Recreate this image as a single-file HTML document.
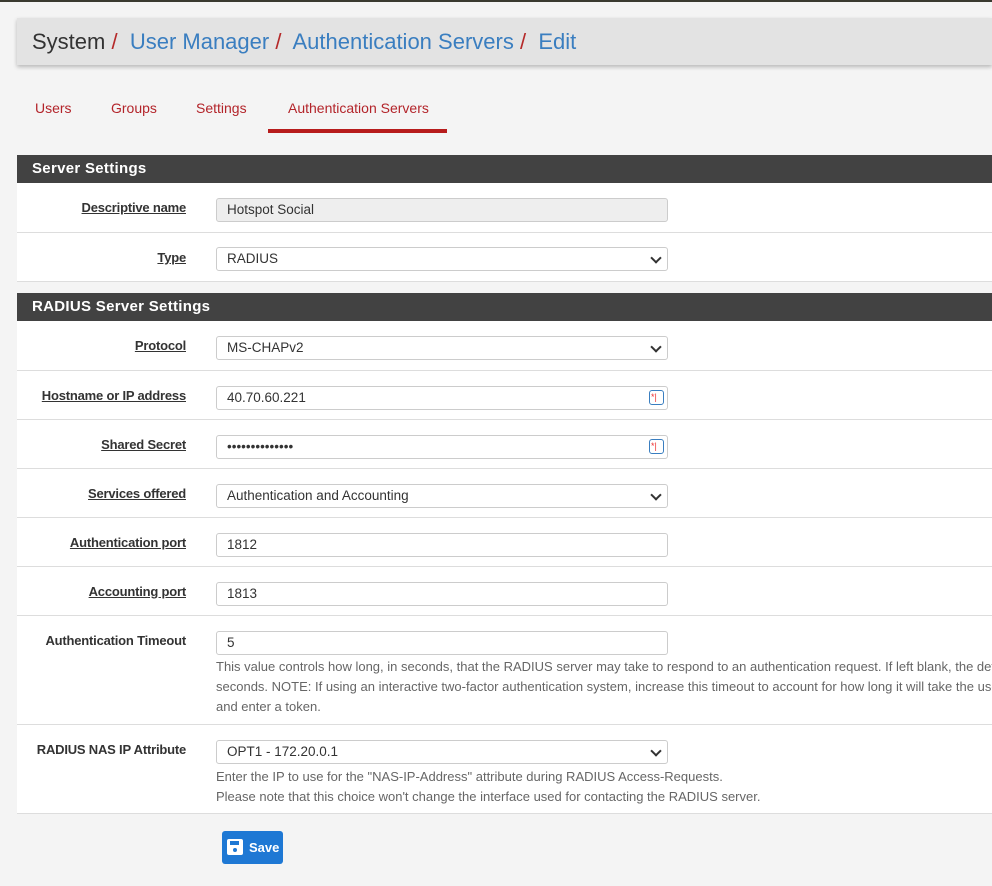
<!DOCTYPE html>
<html><head><style>
*{box-sizing:border-box;margin:0;padding:0}
html,body{width:992px;height:886px;overflow:hidden}
body{background:#f4f4f4;font-family:"Liberation Sans",sans-serif;position:relative}
.top{position:absolute;left:0;top:0;width:992px;height:2px;background:#3a3a30}
.bc{position:absolute;left:17px;top:18px;width:975px;height:47px;background:#e3e3e3;box-shadow:0 2px 4px rgba(0,0,0,.25);font-size:22px;line-height:47px;padding-left:15px;color:#333;white-space:nowrap}
.bc a{color:#3a7ec0;text-decoration:none}
.bc s{text-decoration:none;color:#b52a2a}
.tab{position:absolute;top:100px;font-size:14px;color:#b3242a}
.ul{position:absolute;left:268px;top:129px;width:179px;height:4px;background:#b71c1c}
.hd{position:absolute;left:17px;width:975px;height:28px;background:#424242;color:#fff;font-weight:bold;font-size:15px;line-height:28px;padding-left:15px;letter-spacing:.3px}
.row{position:absolute;left:17px;width:975px;background:#fff;border-bottom:1px solid #ddd;overflow:hidden}
.lbl{position:absolute;right:806px;top:17px;font-weight:bold;font-size:13px;color:#333;text-decoration:underline;white-space:nowrap;letter-spacing:-.2px}
.lbl.nu{text-decoration:none}
.in{position:absolute;left:199px;top:15px;width:452px;height:24px;border:1px solid #ccc;border-radius:3px;background:#fff;font-size:13.5px;color:#333;line-height:22px;padding-left:10px}
.ro{background:#eee}
.sel::after{content:"";position:absolute;right:7px;top:6px;width:6px;height:6px;border-right:2px solid #333;border-bottom:2px solid #333;transform:rotate(45deg)}
.help{position:absolute;left:199px;font-size:13px;color:#666;line-height:20px;white-space:nowrap}
.ic{position:absolute;right:3px;top:3px;width:15px;height:15px;border:1.5px solid #3a7ec0;border-radius:3px;color:#e33;font-size:9px;line-height:12px;padding-left:1px}
.save{position:absolute;left:222px;top:831px;width:61px;height:33px;background:#1e78d4;border-radius:3px;color:#fff;font-weight:bold;font-size:13px;line-height:33px;padding-left:27px;white-space:nowrap}
.save i{position:absolute;left:5px;top:8px;width:16px;height:16px;background:#fff;border-radius:2px}
.save i::before{content:"";position:absolute;left:3px;top:2px;width:9px;height:4px;background:#1e78d4}
.save i::after{content:"";position:absolute;left:6px;top:9px;width:4px;height:4px;background:#1e78d4;border-radius:50%}
</style></head><body>
<div class="top"></div>
<div class="bc">System <s>/</s>&nbsp; <a>User Manager</a> <s>/</s>&nbsp; <a>Authentication Servers</a> <s>/</s>&nbsp; <a>Edit</a></div>
<div class="tab" style="left:35px">Users</div>
<div class="tab" style="left:111px">Groups</div>
<div class="tab" style="left:196px">Settings</div>
<div class="tab" style="left:288px">Authentication Servers</div>
<div class="ul"></div>

<div class="hd" style="top:155px">Server Settings</div>
<div class="row" style="top:183px;height:50px"><div class="lbl" style="right:806px">Descriptive name</div><div class="in ro" style="top:15px">Hotspot Social</div></div>
<div class="row" style="top:233px;height:49px"><div class="lbl">Type</div><div class="in sel" style="top:14px">RADIUS</div></div>

<div class="hd" style="top:293px">RADIUS Server Settings</div>
<div class="row" style="top:321px;height:50px"><div class="lbl">Protocol</div><div class="in sel">MS-CHAPv2</div></div>
<div class="row" style="top:371px;height:49px"><div class="lbl">Hostname or IP address</div><div class="in">40.70.60.221<span class="ic">*|</span></div></div>
<div class="row" style="top:420px;height:49px"><div class="lbl">Shared Secret</div><div class="in">••••••••••••••<span class="ic">*|</span></div></div>
<div class="row" style="top:469px;height:49px"><div class="lbl">Services offered</div><div class="in sel">Authentication and Accounting</div></div>
<div class="row" style="top:518px;height:49px"><div class="lbl">Authentication port</div><div class="in">1812</div></div>
<div class="row" style="top:567px;height:49px"><div class="lbl">Accounting port</div><div class="in">1813</div></div>
<div class="row" style="top:616px;height:109px"><div class="lbl nu">Authentication Timeout</div><div class="in">5</div>
<div class="help" style="top:41px">This value controls how long, in seconds, that the RADIUS server may take to respond to an authentication request. If left blank, the default value is 5<br>seconds. NOTE: If using an interactive two-factor authentication system, increase this timeout to account for how long it will take the user to receive<br>and enter a token.</div></div>
<div class="row" style="top:725px;height:89px"><div class="lbl nu">RADIUS NAS IP Attribute</div><div class="in sel">OPT1 - 172.20.0.1</div>
<div class="help" style="top:42px">Enter the IP to use for the "NAS-IP-Address" attribute during RADIUS Access-Requests.<br>Please note that this choice won't change the interface used for contacting the RADIUS server.</div></div>

<div class="save"><i></i>Save</div>
</body></html>
